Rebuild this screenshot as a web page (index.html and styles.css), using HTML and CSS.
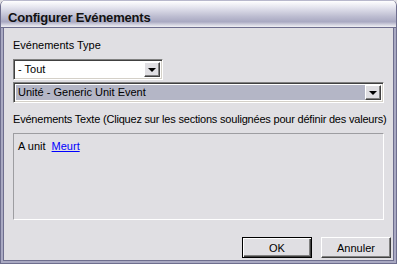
FILE: index.html
```html
<!DOCTYPE html>
<html lang="fr">
<head>
    <meta charset="UTF-8">
    <title>Configurer Evénements</title>
    <link rel="stylesheet" href="styles.css">
</head>
<body>
    <div class="window">
        <div class="title-bar">Configurer Evénements</div>
        <div class="client">
            <div class="label">Evénements Type</div>
            <div class="combo combo-small">
                <span class="combo-text">- Tout</span>
                <span class="combo-btn"><span class="arrow"></span></span>
            </div>
            <div class="combo combo-wide">
                <span class="combo-text">Unité - Generic Unit Event</span>
                <span class="combo-btn"><span class="arrow"></span></span>
            </div>
            <div class="label label-text">Evénements Texte (Cliquez sur les sections soulignées pour définir des valeurs)</div>
            <div class="text-box">A unit <a href="#" class="link">Meurt</a></div>
            <div class="buttons">
                <button class="btn btn-default">OK</button>
                <button class="btn">Annuler</button>
            </div>
        </div>
    </div>
</body>
</html>
```

FILE: styles.css
```css
body {
    margin: 0;
    padding: 0;
    font-family: "Liberation Sans", Arial, sans-serif;
    font-size: 11px;
    background: #e0dfe3;
}

.window {
    width: 397px;
    height: 264px;
    box-sizing: border-box;
    background: #e0dfe3;
    border: 1px solid #6e6e8e;
    border-top: none;
    border-radius: 6px 6px 0 0;
    display: flex;
    flex-direction: column;
    overflow: hidden;
}

.title-bar {
    height: 28px;
    box-sizing: border-box;
    padding: 9px 0 0 7px;
    font-size: 13px;
    font-weight: bold;
    letter-spacing: -0.2px;
    color: #111;
    border-top: 1px solid #b8b8cc;
    border-bottom: 1px solid #6e6e8e;
    background: linear-gradient(to bottom, #ffffff 0%, #e4e4ee 25%, #bcbcd0 60%, #a9a9c2 80%, #d6d6e2 92%, #f0f0f4 100%);
}

.client {
    flex: 1;
    border-left: 2px solid #a9a9c2;
    border-right: 2px solid #a9a9c2;
    border-bottom: 2px solid #a9a9c2;
    box-shadow: inset 1px 0 0 #6e6e8e, inset -1px 0 0 #6e6e8e, inset 0 -1px 0 #6e6e8e;
    padding: 10px 8px 0 10px;
    display: flex;
    flex-direction: column;
}

.label {
    color: #000;
    height: 14px;
    line-height: 14px;
    margin-bottom: 7px;
    white-space: nowrap;
}

.combo {
    height: 21px;
    box-sizing: border-box;
    border: 1px solid #808080;
    border-right-color: #fff;
    border-bottom-color: #fff;
    box-shadow: inset 1px 1px 0 #404040, inset -1px -1px 0 #d4d0c8;
    background: #fff;
    display: flex;
    align-items: center;
    padding: 2px;
}

.combo-small {
    width: 150px;
    margin-bottom: 2px;
}

.combo-wide {
    width: 371px;
    margin-bottom: 9px;
}

.combo-wide .combo-text {
    background: #b4b6c6;
}

.combo-text {
    flex: 1;
    height: 15px;
    line-height: 15px;
    padding-left: 2px;
}

.combo-btn {
    width: 16px;
    height: 15px;
    box-sizing: border-box;
    background: #e0dfe3;
    border: 1px solid #fff;
    border-right-color: #404040;
    border-bottom-color: #404040;
    box-shadow: inset -1px -1px 0 #808080;
    display: flex;
    align-items: center;
    justify-content: center;
}

.arrow {
    width: 0;
    height: 0;
    border-left: 4px solid transparent;
    border-right: 4px solid transparent;
    border-top: 4px solid #000;
    margin: 1px 1px 0 0;
}

.label-text {
    margin-bottom: 7px;
    letter-spacing: -0.2px;
}

.text-box {
    width: 371px;
    height: 87px;
    box-sizing: border-box;
    border: 1px solid #9d9da1;
    border-right-color: #fff;
    border-bottom-color: #fff;
    padding: 5px 4px;
    line-height: 14px;
}

.link {
    color: #0000ff;
    margin-left: 3px;
}

.buttons {
    display: flex;
    justify-content: flex-end;
    gap: 9px;
    margin-top: 17px;
    margin-right: -5px;
}

.btn {
    width: 70px;
    height: 21px;
    box-sizing: border-box;
    font-family: "Liberation Sans", Arial, sans-serif;
    font-size: 11px;
    color: #000;
    background: #e0dfe3;
    border: 1px solid #fff;
    border-right-color: #404040;
    border-bottom-color: #404040;
    box-shadow: inset -1px -1px 0 #808080;
    padding: 0;
}

.btn-default {
    border: 1px solid #000;
    box-shadow: inset 1px 1px 0 #fff, inset -1px -1px 0 #404040, inset -2px -2px 0 #808080;
}
```
